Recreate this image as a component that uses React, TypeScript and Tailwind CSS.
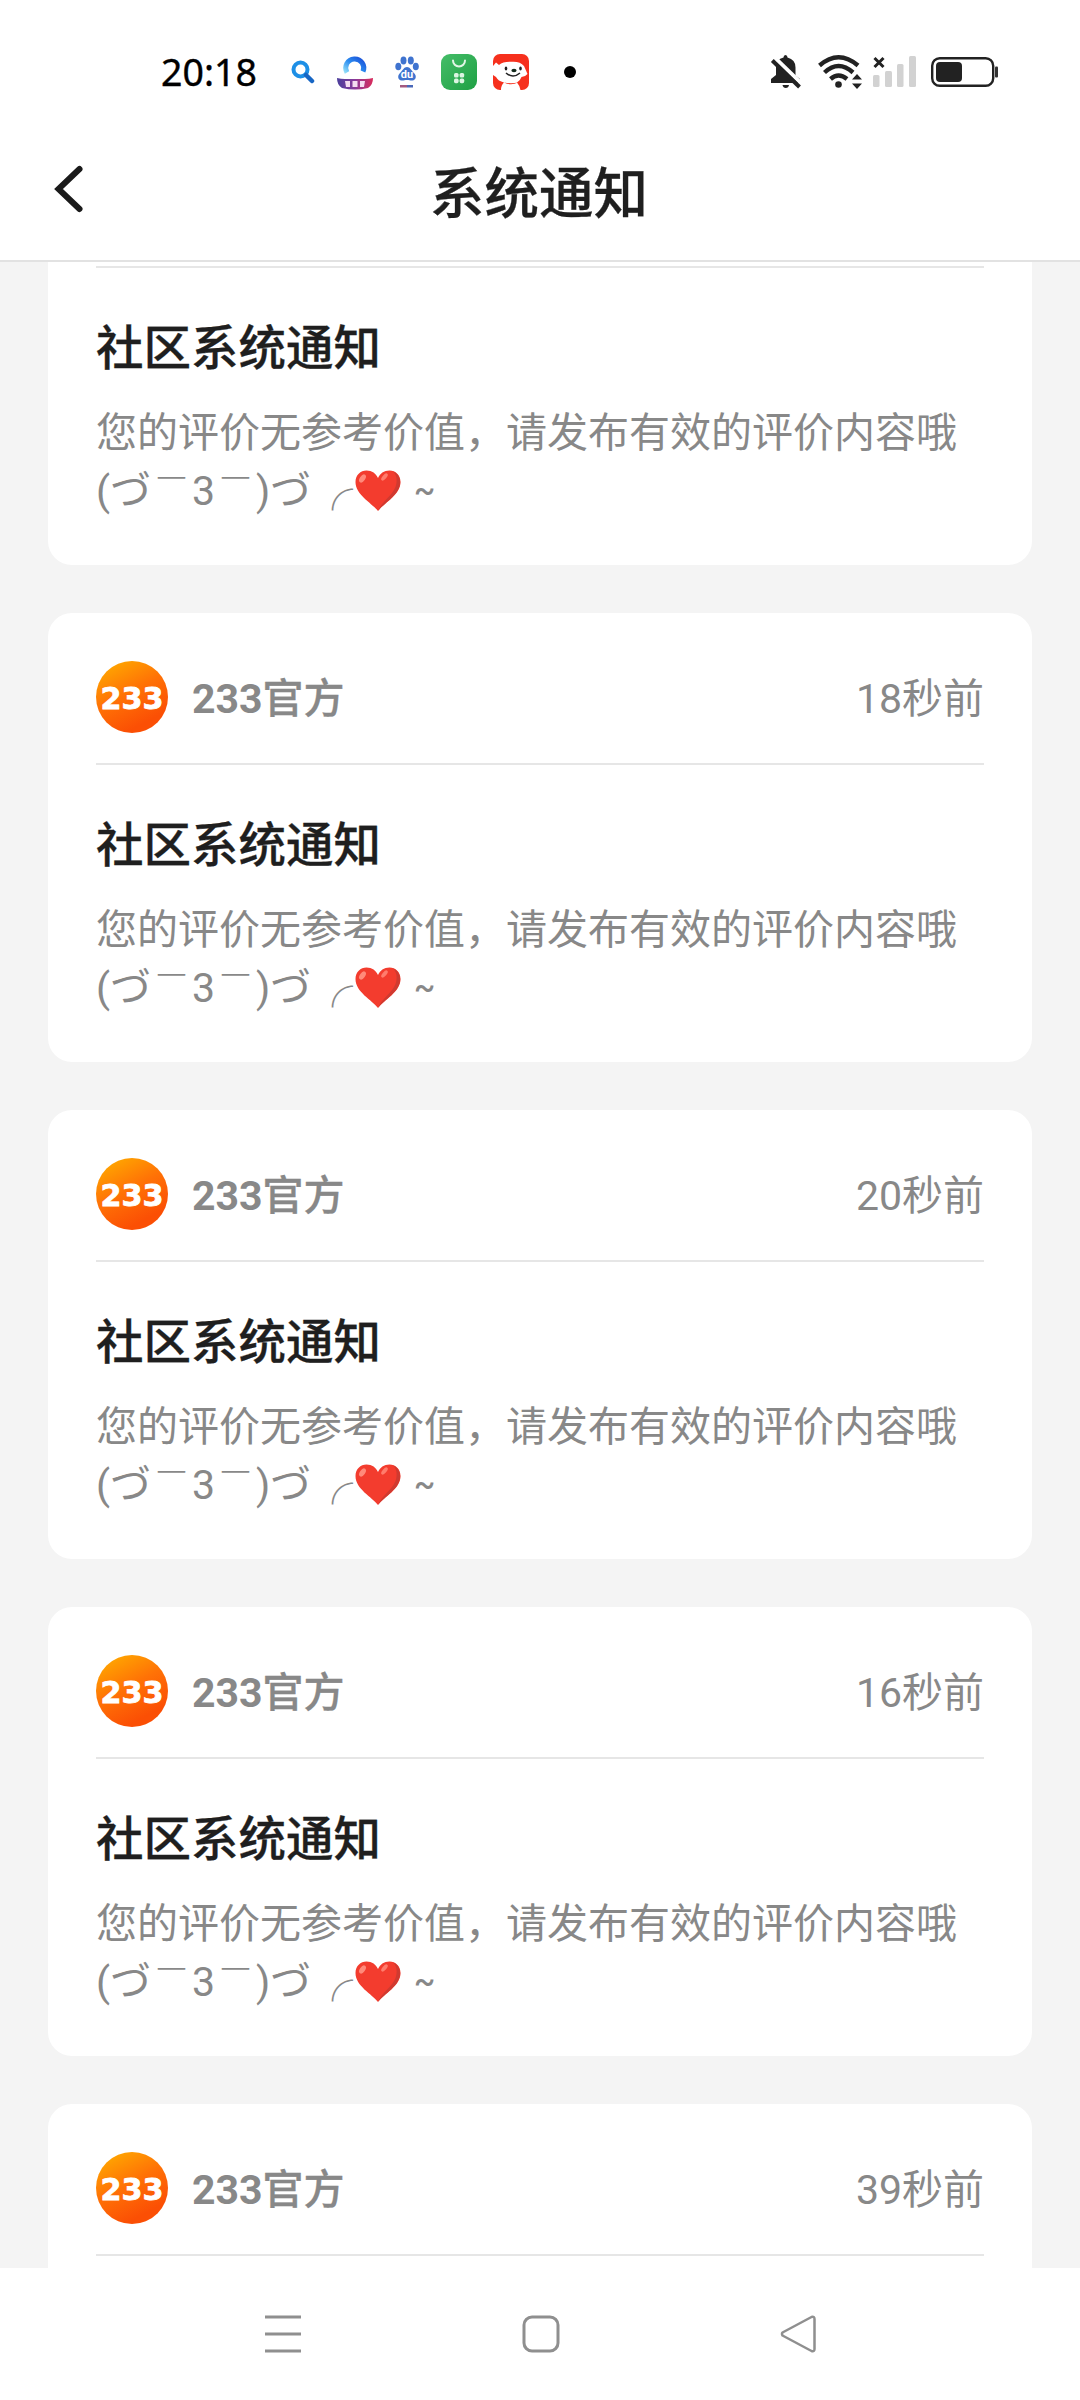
const cjk = "font-[Roboto,'Noto_Sans_CJK_SC',sans-serif]";

function SearchIcon() {
  return (
    <svg width="24" height="24" viewBox="0 0 24 24" fill="none" className="shrink-0">
      <circle cx="9.5" cy="9.5" r="7" stroke="#1d8fe6" strokeWidth="4" />
      <path d="M15 15l6 6" stroke="#1766c4" strokeWidth="4.5" strokeLinecap="round" />
    </svg>
  );
}

function BrowserIcon() {
  return (
    <svg width="38" height="36" viewBox="0 0 38 36" fill="none" className="shrink-0">
      <defs>
        <linearGradient id="bowl" x1="0" x2="1">
          <stop offset="0" stopColor="#4b3f9c" />
          <stop offset=".5" stopColor="#8a3a9a" />
          <stop offset="1" stopColor="#d92b5b" />
        </linearGradient>
        <linearGradient id="ring" x1="0" y1="1" x2="1" y2="0">
          <stop offset="0" stopColor="#8fdcf8" />
          <stop offset=".5" stopColor="#2b8cf0" />
          <stop offset="1" stopColor="#1b50d8" />
        </linearGradient>
      </defs>
      <path d="M11 18.500A9 9 0 1 1 27 17.500" stroke="url(#ring)" strokeWidth="5" />
      <path d="M1 24q4 1 8 1h20q4 0 8-1q0 7-5 10q-13 3-26 0q-5-3-5-10z" fill="url(#bowl)" />
      <path d="M9 27h5v6H10zM16.500 27h5v6h-5zM24 27h5l-1 6h-4z" fill="#f5dcf0" />
    </svg>
  );
}

function PawIcon() {
  return (
    <svg width="24" height="32" viewBox="0 0 24 32" className="shrink-0">
      <g fill="#3f73cf">
        <ellipse cx="3.300" cy="10.500" rx="3" ry="3.800" />
        <ellipse cx="8.500" cy="4.500" rx="3" ry="4" />
        <ellipse cx="15.800" cy="4.500" rx="3" ry="4" />
        <ellipse cx="20.800" cy="10.500" rx="3" ry="3.800" />
        <path d="M12 11c3 0 4 3 7 6c3 3 2 7-1.500 7.500c-2 .3-3-.5-5.500-.5s-3.500.8-5.500.5C3 24 2 20 5 17c3-3 4-6 7-6z" />
      </g>
      <text x="12" y="22" textAnchor="middle" fontSize="11" fontWeight="700" fill="#fff" fontFamily="Roboto">du</text>
      <rect x="5" y="29" width="7" height="2.500" fill="#a35a80" />
      <rect x="12" y="29" width="6" height="2.500" fill="#4a68b8" />
    </svg>
  );
}

function StoreIcon() {
  return (
    <svg width="36" height="36" viewBox="0 0 36 36" fill="none" className="shrink-0">
      <defs>
        <linearGradient id="store" x1="0" y1="0" x2="1" y2="1">
          <stop offset="0" stopColor="#45bd68" />
          <stop offset="1" stopColor="#1fa044" />
        </linearGradient>
      </defs>
      <rect width="36" height="36" rx="9" fill="url(#store)" />
      <path d="M12 6.500a6 6 0 0 0 12 0" stroke="#e2f6e6" strokeWidth="2" strokeLinecap="round" />
      <g fill="#dcf5e2">
        <rect x="13" y="19" width="4.600" height="4.600" rx="1.600" />
        <rect x="18.600" y="19" width="4.600" height="4.600" rx="1.600" />
        <rect x="13" y="24.600" width="4.600" height="4.600" rx="1.600" />
        <rect x="18.600" y="24.600" width="4.600" height="4.600" rx="1.600" />
      </g>
    </svg>
  );
}

function DogIcon() {
  return (
    <svg width="36" height="36" viewBox="0 0 36 36" fill="none" className="shrink-0">
      <rect width="36" height="36" rx="7" fill="#f6301d" />
      <path d="M0 12L3 8.500L6 11Q10 7.500 18 7.800Q27 7 31 12L34.500 20Q32 23 28.500 23Q27 27 24 28.500Q27 32 27.500 36H8Q8 31 11 28.500Q5 27 3 23L0 21z" fill="#fff" />
      <path d="M11 28.500Q18 32 25 28.500Q18 30 11 28.500z" fill="#f6301d" />
      <ellipse cx="13" cy="14.500" rx="1.300" ry="1.900" fill="#222" />
      <ellipse cx="27.500" cy="14.500" rx="1.300" ry="1.900" fill="#222" />
      <ellipse cx="21" cy="16.500" rx="2.600" ry="1.800" fill="#142a1c" />
      <path d="M13 19q7 6 14 0" stroke="#222" strokeWidth="1.500" />
    </svg>
  );
}

function MutedBell() {
  return (
    <svg width="32" height="36" viewBox="0 0 32 36" className="shrink-0">
      <path d="M13.500 3.500q0-2.500 2-2.500t2 2.500q8 2 8 10v8l4.500 3.500v4H1v-4l5-4v-8q0-7.500 7.500-9.500z" fill="#222" />
      <path d="M12.500 31h6.500q-.5 3-3.200 3t-3.300-3z" fill="#222" />
      <path d="M4 3L33 31" stroke="#fff" strokeWidth="4" />
      <path d="M2.300 6.500L29.500 33" stroke="#222" strokeWidth="4" />
    </svg>
  );
}

function Wifi() {
  return (
    <svg width="46" height="36" viewBox="0 0 46 36" fill="none" className="shrink-0">
      <g stroke="#222" strokeWidth="4.400">
        <path d="M1.500 11.500Q20.500-5 40 11.500" />
        <path d="M6.500 18.500Q20.500 5.500 35 18.500" />
        <path d="M12.500 25Q20.500 18 29 25" />
      </g>
      <circle cx="20.500" cy="30.500" r="3.300" fill="#222" />
      <path d="M39 20l5 5.500H34zM39 35l5-5.500H34z" fill="#222" />
    </svg>
  );
}

function Signal() {
  return (
    <svg width="44" height="32" viewBox="0 0 44 32" className="shrink-0">
      <g fill="#d2d2d2">
        <rect x="0" y="19" width="6.500" height="12" rx="1.500" />
        <rect x="12" y="15" width="7" height="16" rx="1.500" />
        <rect x="24" y="8" width="6.500" height="23" rx="1.500" />
        <rect x="36" y="0" width="7" height="31" rx="1.500" />
      </g>
      <path d="M1.500 2L10.500 11M10.500 2L1.500 11" stroke="#222" strokeWidth="3" />
    </svg>
  );
}

function Battery() {
  return (
    <svg width="67" height="30" viewBox="0 0 67 30" fill="none" className="shrink-0">
      <rect x="1.200" y="1.200" width="61" height="27.600" rx="7.500" stroke="#222" strokeWidth="2.400" />
      <rect x="5" y="5" width="26" height="20" rx="4" fill="#222" />
      <rect x="64" y="9.500" width="3" height="11" rx="1" fill="#333" />
    </svg>
  );
}

function Avatar() {
  return (
    <svg width="72" height="72" viewBox="0 0 72 72" fill="none" className="shrink-0">
      <defs>
        <linearGradient id="avatar" x1="0.150" y1="0.050" x2="0.600" y2="0.900">
          <stop offset="0" stopColor="#ffa700" />
          <stop offset=".5" stopColor="#ff7206" />
          <stop offset="1" stopColor="#fb4f04" />
        </linearGradient>
      </defs>
      <circle cx="36" cy="36" r="36" fill="url(#avatar)" />
      <text x="4.500" y="47.500" textLength="63" lengthAdjust="spacingAndGlyphs" fontFamily="DejaVu Sans" fontWeight="700" fontSize="31" fill="#fff" stroke="#fff" strokeWidth=".8">233</text>
    </svg>
  );
}

function Heart() {
  return (
    <svg width="46" height="42" viewBox="0 0 46 42" className="shrink-0">
      <path d="M23 41C17 33 .5 25 .5 12C.5 5 5.500 .5 11.500 .5C17 .5 21 3.500 23 8C25 3.500 29 .5 34.500 .5C40.500 .5 45.500 5 45.500 12C45.500 25 29 33 23 41z" fill="#f33c2e" />
      <path d="M38 1.500C45 4 47 12 43.500 19C39 28 30 32 23 41C27 31 37 26 40.500 17C42.500 11 42 5 38 1.500z" fill="#cf3a30" />
      <ellipse cx="7.500" cy="8.500" rx="2.600" ry="4.600" transform="rotate(35 7.500 8.500)" fill="#ff8a7a" />
      <ellipse cx="29.500" cy="7" rx="2" ry="4.400" transform="rotate(40 29.500 7)" fill="#ff7c6c" />
    </svg>
  );
}

function Sender({ time }: { time: string }) {
  return (
    <div className="flex h-[104px] items-start border-b-2 border-[#e6e6e6]">
      <Avatar />
      <span className="ml-6 flex-1 text-[41px] leading-[76px] font-bold text-[#888]">
        233<span className="font-medium [-webkit-text-stroke:0.3px_#888]">官方</span>
      </span>
      <span className="text-[41px] leading-[76px] text-[#888]">{time}</span>
    </div>
  );
}

function Message() {
  return (
    <>
      <h2 className="mt-[46px] text-[47.500px] leading-[70px] font-medium text-[#1f1f1f] [-webkit-text-stroke:0.3px_#1f1f1f]">社区系统通知</h2>
      <p className="mt-[20px] text-[41px] leading-[59px] whitespace-nowrap text-[#888]">您的评价无参考价值，请发布有效的评价内容哦</p>
      <p className="-mt-px flex h-[59px] text-[41px] leading-[59px] whitespace-nowrap text-[#888]">
        <span className="w-[14px]">(</span>
        <span className="w-[41px]">づ</span>
        <span className="w-[41px] translate-y-[8px] scale-x-[0.67]">￣</span>
        <span className="w-[23px]">3</span>
        <span className="w-[41px] translate-y-[8px] scale-x-[0.67]">￣</span>
        <span className="w-[14px]">)</span>
        <span className="w-[41px]">づ</span>
        <span className="ml-px w-[43px]">╭</span>
        <span className="mt-[8px] w-[46px]"><Heart /></span>
        <span className="ml-[13px] -translate-y-px text-[32px] font-medium">~</span>
      </p>
    </>
  );
}

function Card({ time }: { time: string }) {
  return (
    <article className="h-[449px] shrink-0 rounded-[24px] bg-white px-12 pt-12">
      <Sender time={time} />
      <Message />
    </article>
  );
}

export default function App() {
  return (
    <div className={"flex h-[2400px] w-[1080px] flex-col overflow-hidden bg-white " + cjk}>
      <div className="flex h-[144px] shrink-0 items-center pl-[161px]">
        <span className="w-[130px] font-['Noto_Sans'] text-[37.500px] text-black [-webkit-text-stroke:0.4px_#000]">20:18</span>
        <div className="flex items-center">
          <SearchIcon />
          <div className="ml-[21px]"><BrowserIcon /></div>
          <div className="ml-[21px]"><PawIcon /></div>
          <div className="ml-[22px]"><StoreIcon /></div>
          <div className="ml-[16px]"><DogIcon /></div>
          <div className="ml-[35px] size-3 rounded-full bg-black" />
        </div>
        <div className="ml-[194px] flex items-center">
          <MutedBell />
          <div className="ml-[16px]"><Wifi /></div>
          <div className="ml-[9px]"><Signal /></div>
          <div className="ml-[14px]"><Battery /></div>
        </div>
      </div>
      <header className="flex h-[118px] shrink-0 items-start border-b-2 border-[#e2e2e2] pl-[53px]">
        <svg width="32" height="50" viewBox="0 0 32 50" fill="none" className="mt-[20px]">
          <path d="M26.500 5L5.500 25L26.500 45" stroke="#1a1a1a" strokeWidth="6" strokeLinecap="round" />
        </svg>
        <h1 className="ml-[345px] text-[54.500px] leading-[101px] font-medium text-[#1f1f1f] [-webkit-text-stroke:0.3px_#1f1f1f]">系统通知</h1>
      </header>
      <main className="flex h-[2006px] shrink-0 flex-col gap-12 bg-[#f4f4f4] px-12">
        <article className="h-[303px] shrink-0 rounded-b-[24px] bg-white px-12 pt-1">
          <div className="h-[2px] bg-[#e6e6e6]" />
          <Message />
        </article>
        <Card time="18秒前" />
        <Card time="20秒前" />
        <Card time="16秒前" />
        <article className="h-[164px] shrink-0 rounded-t-[24px] bg-white px-12 pt-12">
          <Sender time="39秒前" />
        </article>
      </main>
      <nav className="flex h-[132px] shrink-0 items-center bg-white pl-[264px]">
        <svg width="38" height="38" viewBox="0 0 38 38" stroke="#8f8f8f" strokeWidth="3">
          <path d="M1 2h36M1 19h36M1 36h36" />
        </svg>
        <svg width="38" height="38" viewBox="0 0 38 38" fill="none" stroke="#8f8f8f" strokeWidth="3" className="ml-[220px]">
          <rect x="2" y="2" width="34" height="34" rx="8" />
        </svg>
        <svg width="38" height="38" viewBox="0 0 38 38" fill="none" stroke="#8f8f8f" strokeWidth="2.500" strokeLinejoin="round" className="ml-[220px]">
          <path d="M2.500 17.500Q1.500 19 2.500 20.500L31.500 36Q34.500 37 34.500 34V4Q34.500 1 31.500 2z" />
        </svg>
      </nav>
    </div>
  );
}
